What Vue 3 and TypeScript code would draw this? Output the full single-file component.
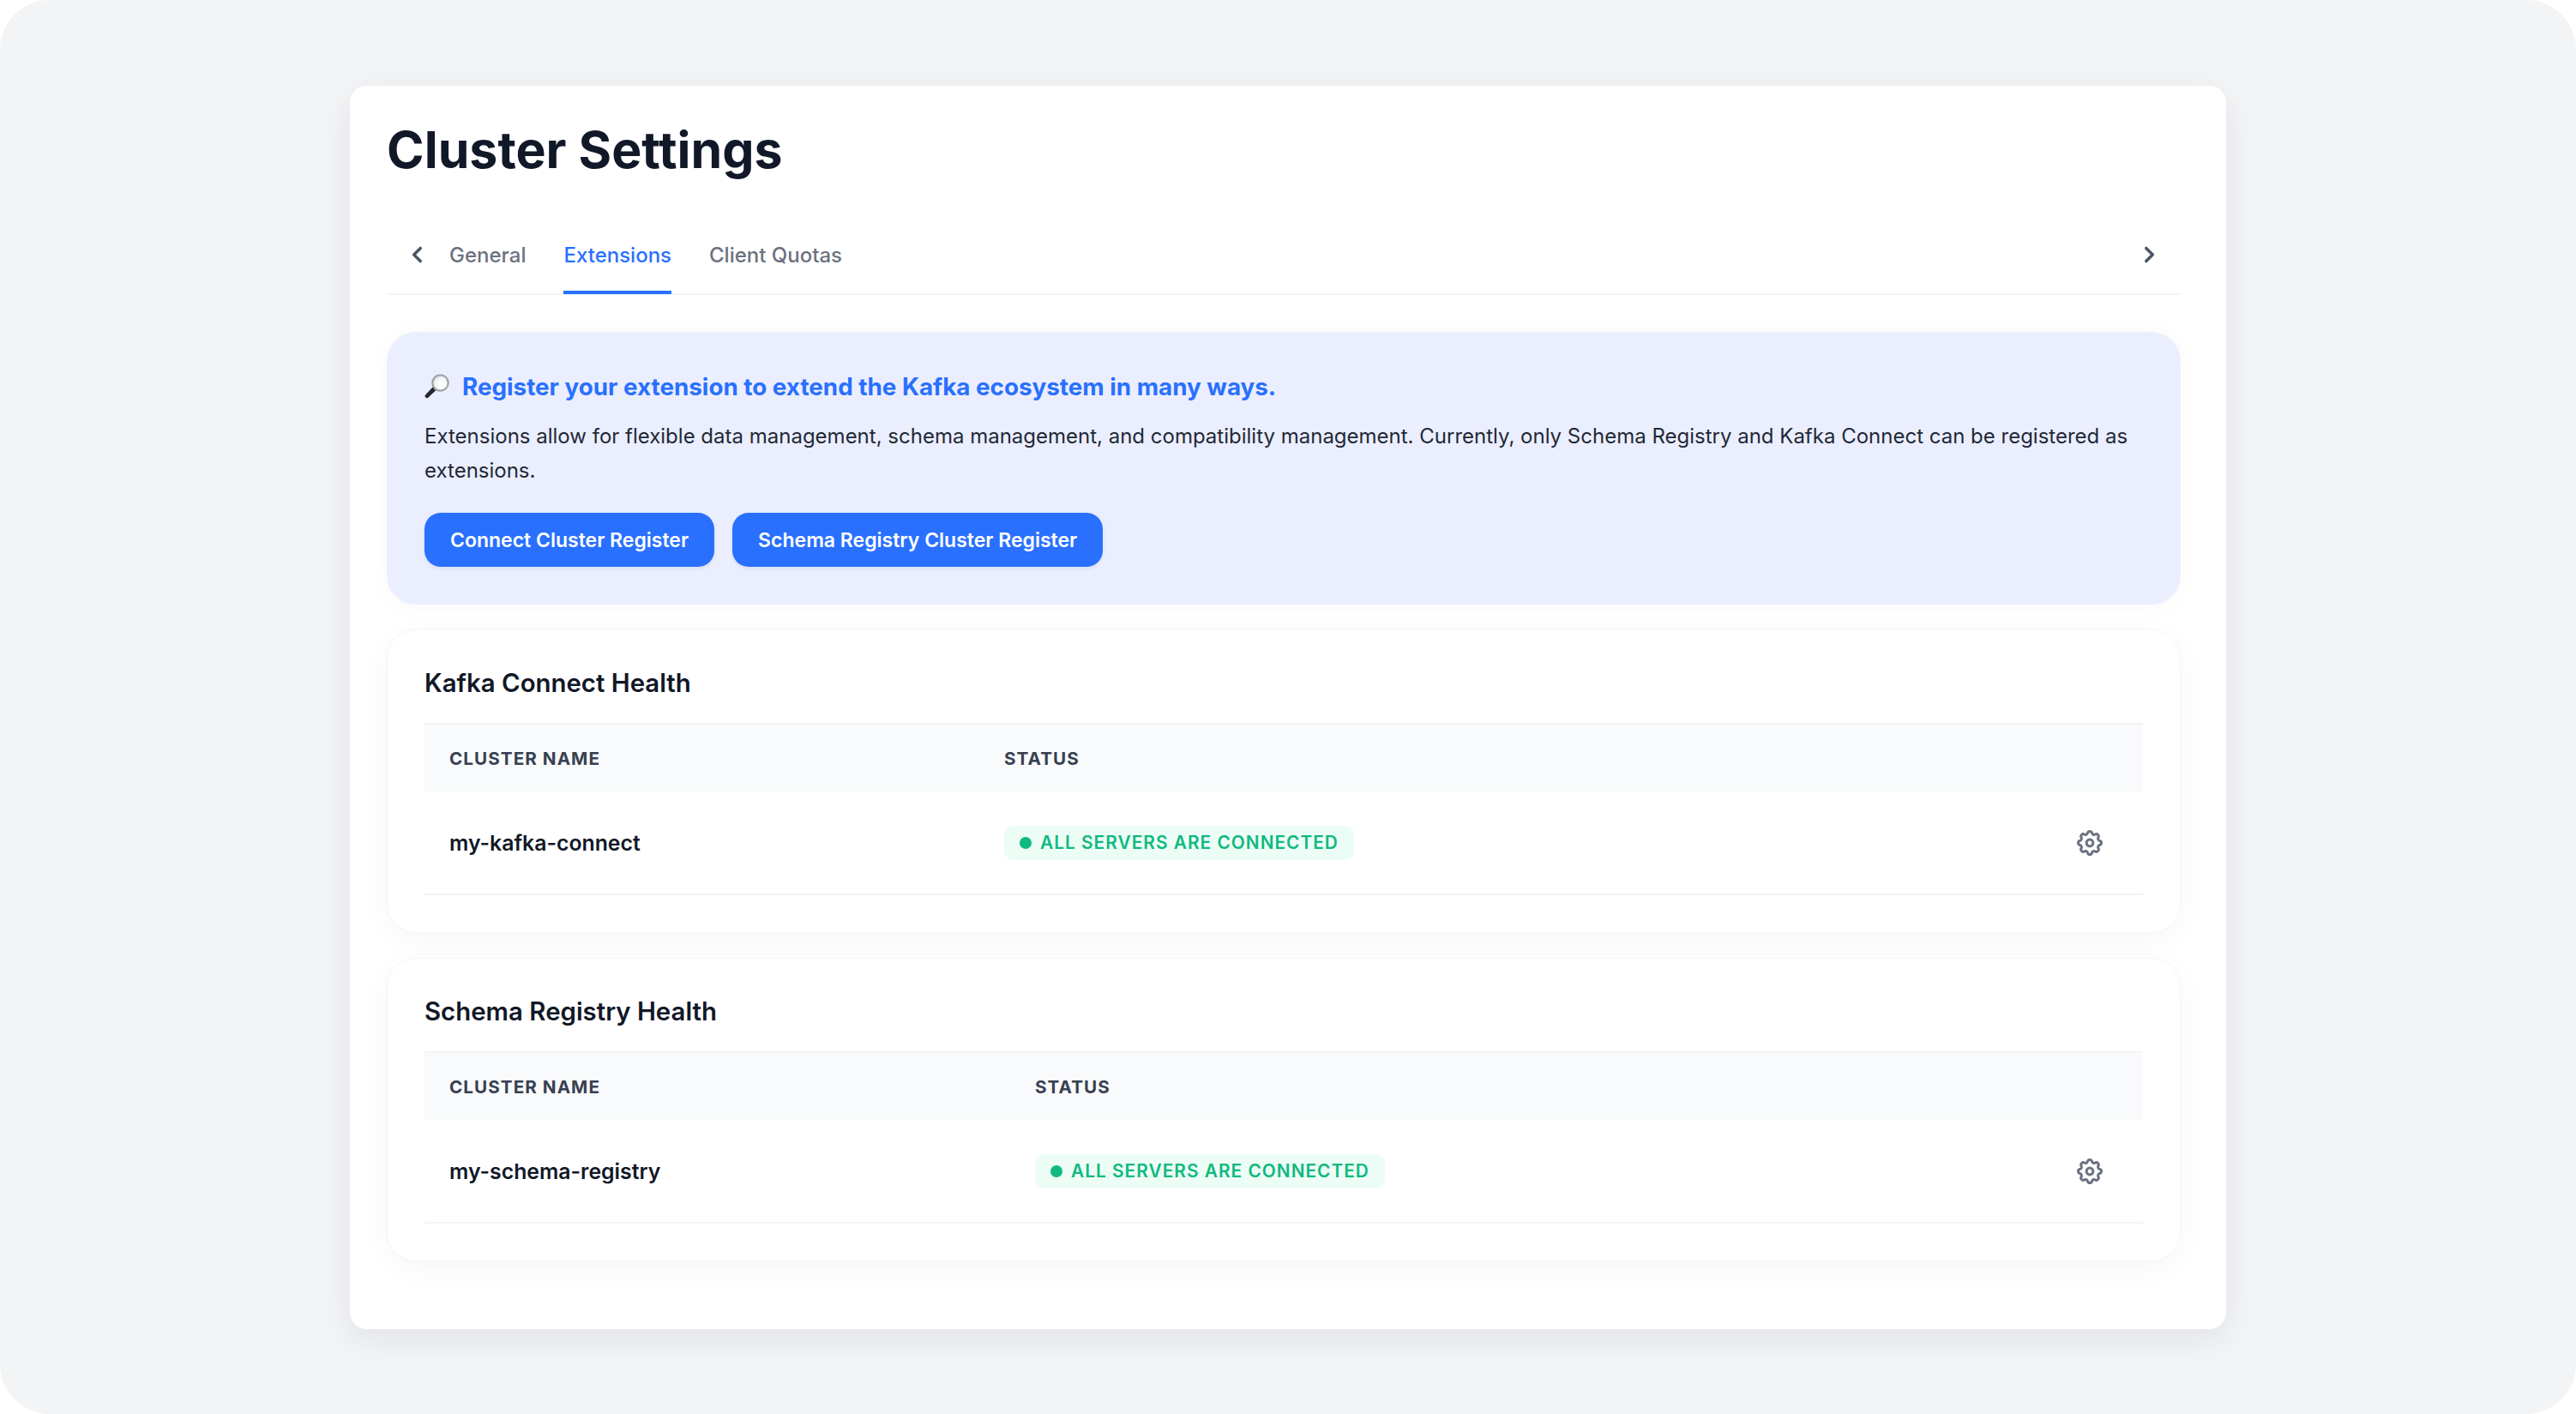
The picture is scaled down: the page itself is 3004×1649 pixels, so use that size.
<script setup lang="ts">
interface Health {
  title: string
  name: string
  firstColumn: string
}
const sections: Health[] = [
  { title: 'Kafka Connect Health', name: 'my-kafka-connect', firstColumn: 'kafka' },
  { title: 'Schema Registry Health', name: 'my-schema-registry', firstColumn: 'schema' },
]
</script>

<template>
  <div class="page">
    <main class="card">
      <h1 class="title">Cluster Settings</h1>
      <nav class="tabs">
        <svg class="chev" viewBox="0 0 24 24"><path d="M15 5l-7 7 7 7" /></svg>
        <a class="tab">General</a>
        <a class="tab active">Extensions</a>
        <a class="tab">Client Quotas</a>
        <span class="spacer"></span>
        <svg class="chev right" viewBox="0 0 24 24"><path d="M9 5l7 7-7 7" /></svg>
      </nav>

      <section class="banner">
        <h2 class="banner-title">
          <svg class="emoji" viewBox="0 0 30 30">
            <defs>
              <radialGradient id="lens" cx="0.6" cy="0.6" r="0.7">
                <stop offset="0" stop-color="#ffffff" />
                <stop offset="0.6" stop-color="#f4f5f6" />
                <stop offset="1" stop-color="#c3c7cc" />
              </radialGradient>
            </defs>
            <path d="M10.500 14.500L1.500 24c-1.200 1.300-1.200 2.500-.2 3.500s2.300 1 3.500-.2l9.200-8.800z" fill="#24282c" />
            <circle cx="18.500" cy="10.500" r="9.200" fill="url(#lens)" stroke="#9ea3a8" stroke-width="2.200" />
          </svg>
          <span>Register your extension to extend the Kafka ecosystem in many ways.</span>
        </h2>
        <p class="banner-text">
          Extensions allow for flexible data management, schema management, and compatibility management. Currently, only Schema Registry and Kafka Connect can be registered as extensions.
        </p>
        <div class="actions">
          <button class="btn">Connect Cluster Register</button>
          <button class="btn">Schema Registry Cluster Register</button>
        </div>
      </section>

      <section v-for="s in sections" :key="s.title" class="health">
        <h3 class="health-title">{{ s.title }}</h3>
        <div class="row head" :class="s.firstColumn">
          <div>Cluster Name</div>
          <div>Status</div>
        </div>
        <div class="row body" :class="s.firstColumn">
          <div class="name">{{ s.name }}</div>
          <div class="status">
            <span class="badge"><i class="dot"></i>All servers are connected</span>
          </div>
          <svg class="gear" viewBox="0 0 24 24">
            <path d="M10.325 4.317c.426-1.756 2.924-1.756 3.35 0a1.724 1.724 0 002.573 1.066c1.543-.94 3.31.826 2.37 2.37a1.724 1.724 0 001.065 2.572c1.756.426 1.756 2.924 0 3.35a1.724 1.724 0 00-1.066 2.573c.94 1.543-.826 3.31-2.37 2.37a1.724 1.724 0 00-2.572 1.065c-.426 1.756-2.924 1.756-3.35 0a1.724 1.724 0 00-2.573-1.066c-1.543.94-3.31-.826-2.37-2.37a1.724 1.724 0 00-1.065-2.572c-1.756-.426-1.756-2.924 0-3.35a1.724 1.724 0 001.066-2.573c-.94-1.543.826-3.31 2.37-2.37.996.608 2.296.07 2.572-1.065z" />
            <circle cx="12" cy="12" r="2.600" />
          </svg>
        </div>
      </section>
    </main>
  </div>
</template>

<style>
html, body { margin: 0; background: #ffffff; }
</style>

<style scoped>
.page {
  box-sizing: border-box;
  width: 3004px;
  height: 1649px;
  padding: 100px 408px 99px;
  background: #f3f4f6;
  border-radius: 58px;
  font-family: Inter, "Liberation Sans", sans-serif;
  overflow: hidden;
}
.card {
  box-sizing: border-box;
  width: 2188px;
  height: 1450px;
  padding: 0 53px 0 43px;
  background: #ffffff;
  border-radius: 20px;
  box-shadow: 0 12px 40px rgba(17, 24, 39, 0.08);
}
.title {
  margin: 0;
  padding-top: 40px;
  height: 106px;
  box-sizing: border-box;
  font-size: 59px;
  line-height: 70px;
  font-weight: 700;
  color: #111827;
}
.tabs {
  display: flex;
  align-items: center;
  height: 92px;
  margin-top: 46px;
  padding-left: 23px;
  border-bottom: 2px solid #f3f4f6;
  box-sizing: border-box;
}
.chev {
  width: 26px;
  height: 26px;
  fill: none;
  stroke: #4b5563;
  stroke-width: 3.200;
  stroke-linecap: round;
  stroke-linejoin: round;
  margin-right: 24px;
  flex: none;
}
.spacer { flex: 1; }
.tab {
  position: relative;
  display: flex;
  align-items: center;
  align-self: stretch;
  margin-right: 44px;
  font-size: 24px;
  font-weight: 500;
  color: #6b7280;
}
.tab.active { color: #2970ff; }
.tab.active::after {
  content: "";
  position: absolute;
  left: 0;
  right: 0;
  bottom: -1px;
  height: 4px;
  background: #2970ff;
}
.banner {
  box-sizing: border-box;
  height: 318px;
  margin-top: 43px;
  padding: 42px 44px 0;
  background: #ebeefe;
  border-radius: 34px;
  box-shadow: 0 2px 24px rgba(17, 24, 39, 0.03);
}
.banner-title {
  display: flex;
  align-items: center;
  gap: 14px;
  margin: 0;
  font-size: 27.800px;
  line-height: 44px;
  font-weight: 700;
  color: #2970ff;
}
.emoji { width: 30px; height: 30px; flex: none; }
.banner-text {
  margin: 16px 0 0;
  font-size: 24px;
  line-height: 40px;
  color: #1f2937;
}
.actions {
  display: flex;
  gap: 21px;
  margin-top: 29px;
}
.btn {
  height: 63px;
  padding: 0 30px;
  border: 0;
  border-radius: 19px;
  background: #2970ff;
  color: #ffffff;
  font-family: inherit;
  font-size: 23px;
  font-weight: 600;
  box-shadow: 0 2px 4px rgba(17, 24, 39, 0.08);
}
.health {
  box-sizing: border-box;
  height: 354px;
  margin-top: 29px;
  padding: 0 43px;
  background: #ffffff;
  border: 1px solid #f6f6f7;
  border-radius: 34px;
  box-shadow: 0 8px 32px rgba(17, 24, 39, 0.035);
}
.health-title {
  margin: 0;
  height: 108px;
  box-sizing: border-box;
  padding-top: 40px;
  font-size: 29.400px;
  line-height: 44px;
  font-weight: 600;
  color: #111827;
}
.row {
  display: grid;
  align-items: center;
  padding: 0 44px 0 29px;
}
.row.kafka { grid-template-columns: 647px 1fr 36px; }
.row.schema { grid-template-columns: 683px 1fr 36px; }
.head {
  height: 80px;
  background: #f9fafb;
  border-top: 2px solid #f3f4f6;
  box-sizing: border-box;
  font-size: 20.700px;
  font-weight: 700;
  letter-spacing: 0.05em;
  text-transform: uppercase;
  color: #374151;
}
.body {
  height: 121px;
  border-bottom: 2px solid #f3f4f6;
  box-sizing: border-box;
}
.name {
  font-size: 24.800px;
  font-weight: 600;
  color: #111827;
}
.status { display: flex; }
.badge {
  display: inline-flex;
  align-items: center;
  height: 40px;
  padding: 0 18px;
  border-radius: 10px;
  background: #ecfdf5;
  color: #10b981;
  font-size: 20.800px;
  font-weight: 600;
  letter-spacing: 0.05em;
  text-transform: uppercase;
}
.dot {
  width: 14px;
  height: 14px;
  margin-right: 10px;
  border-radius: 50%;
  background: #10b981;
}
.gear {
  width: 36px;
  height: 36px;
  fill: none;
  stroke: #6b7280;
  stroke-width: 2;
  stroke-linejoin: round;
}
</style>
